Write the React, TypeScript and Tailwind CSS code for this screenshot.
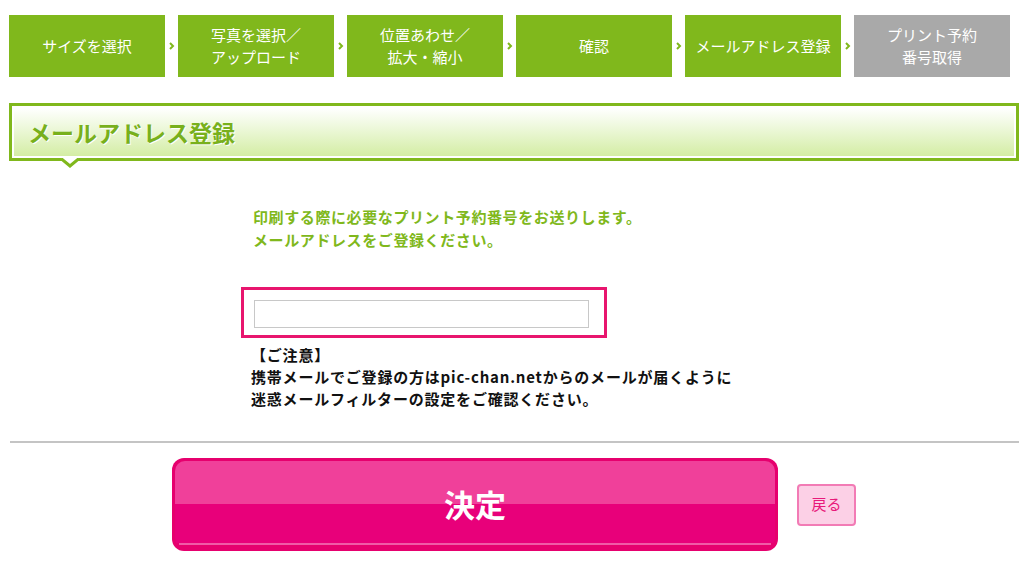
const steps = [
  { label: ["サイズを選択"], active: true },
  { label: ["写真を選択／", "アップロード"], active: true },
  { label: ["位置あわせ／", "拡大・縮小"], active: true },
  { label: ["確認"], active: true },
  { label: ["メールアドレス登録"], active: true },
  { label: ["プリント予約", "番号取得"], active: false },
];

const Chevron = () => (
  <svg width="13" height="10" viewBox="0 0 13 10" className="shrink-0">
    <path d="M5 2 L8 5 L5 8" fill="none" stroke="#80b81c" strokeWidth="2" />
  </svg>
);

const App = () => {
  return (
    <div
      className="w-[1024px] h-[562px] bg-white overflow-hidden"
      style={{ fontFamily: '"Noto Sans CJK JP", "Noto Sans", sans-serif' }}
    >
      {/* steps */}
      <div className="flex items-center pl-[9px] pt-[15px]">
        {steps.map((s, i) => (
          <div key={i} className="flex items-center">
            {i > 0 && <Chevron />}
            <div
              className={`w-[156px] h-[62px] flex flex-col items-center justify-center text-white text-[15px] leading-[22px] ${
                s.active ? "bg-[#80b81c]" : "bg-[#a9a9a9]"
              }`}
            >
              {s.label.map((l) => (
                <span key={l}>{l}</span>
              ))}
            </div>
          </div>
        ))}
      </div>

      {/* heading */}
      <div className="relative ml-[9px] mr-[5px] mt-[26px] h-[58px] border-[3px] border-[#80b81c] p-[2px]">
        <div className="h-full bg-gradient-to-b from-white to-[#d4eda4] flex items-center pl-[14px]">
          <h1
            className="text-[23px] font-bold text-[#78b01c]"
            style={{ textShadow: "1px 1px 0 #fff" }}
          >
            メールアドレス登録
          </h1>
        </div>
        <svg
          width="18"
          height="10"
          viewBox="0 0 18 10"
          className="absolute left-[49px] top-[52px]"
        >
          <path d="M0 0 L9 8 L18 0 Z" fill="#fff" />
          <path d="M0 0.5 L9 8 L18 0.5" fill="none" stroke="#80b81c" strokeWidth="3" />
        </svg>
      </div>

      {/* body */}
      <div className="pl-[241px]">
        <p className="mt-[44px] pl-[12px] text-[15px] leading-[23px] font-bold tracking-[0.6px] text-[#80b81c]">
          印刷する際に必要なプリント予約番号をお送りします。
          <br />
          メールアドレスをご登録ください。
        </p>

        <div className="mt-[36px] w-[366px] h-[51px] border-[3px] border-[#e8156e] pl-[10px] pt-[10px]">
          <input
            type="text"
            className="w-[335px] h-[28px] border border-[#c8c8c8] bg-white outline-none"
          />
        </div>

        <p className="mt-[6px] pl-[10px] text-[15px] leading-[22px] font-bold tracking-[0.8px] text-[#111]">
          【ご注意】
          <br />
          携帯メールでご登録の方はpic-chan.netからのメールが届くように
          <br />
          迷惑メールフィルターの設定をご確認ください。
        </p>
      </div>

      <div className="ml-[10px] mr-[5px] mt-[31px] h-[2px] bg-[#c4c4c4]" />

      {/* buttons */}
      <div className="flex items-center mt-[15px] pl-[172px]">
        <button className="w-[606px] h-[93px] rounded-[12px] bg-[#e6006e] p-[3px] overflow-hidden">
          <div className="relative h-full rounded-[10px] overflow-hidden flex flex-col">
            <div className="h-[43px] bg-[#f0409a]" />
            <div className="flex-1 bg-[#e8007a]" />
            <div className="h-[2px] bg-[#f05aa6] mx-[4px] mb-[3px]" />
            <span className="absolute inset-0 flex items-center justify-center text-white text-[31px] font-bold">
              決定
            </span>
          </div>
        </button>
        <button className="ml-[19px] w-[59px] h-[42px] rounded-[4px] border-2 border-[#f27bb5] bg-[#fcd0e6] text-[#e8197a] text-[15px]">
          戻る
        </button>
      </div>
    </div>
  );
};

export default App;
